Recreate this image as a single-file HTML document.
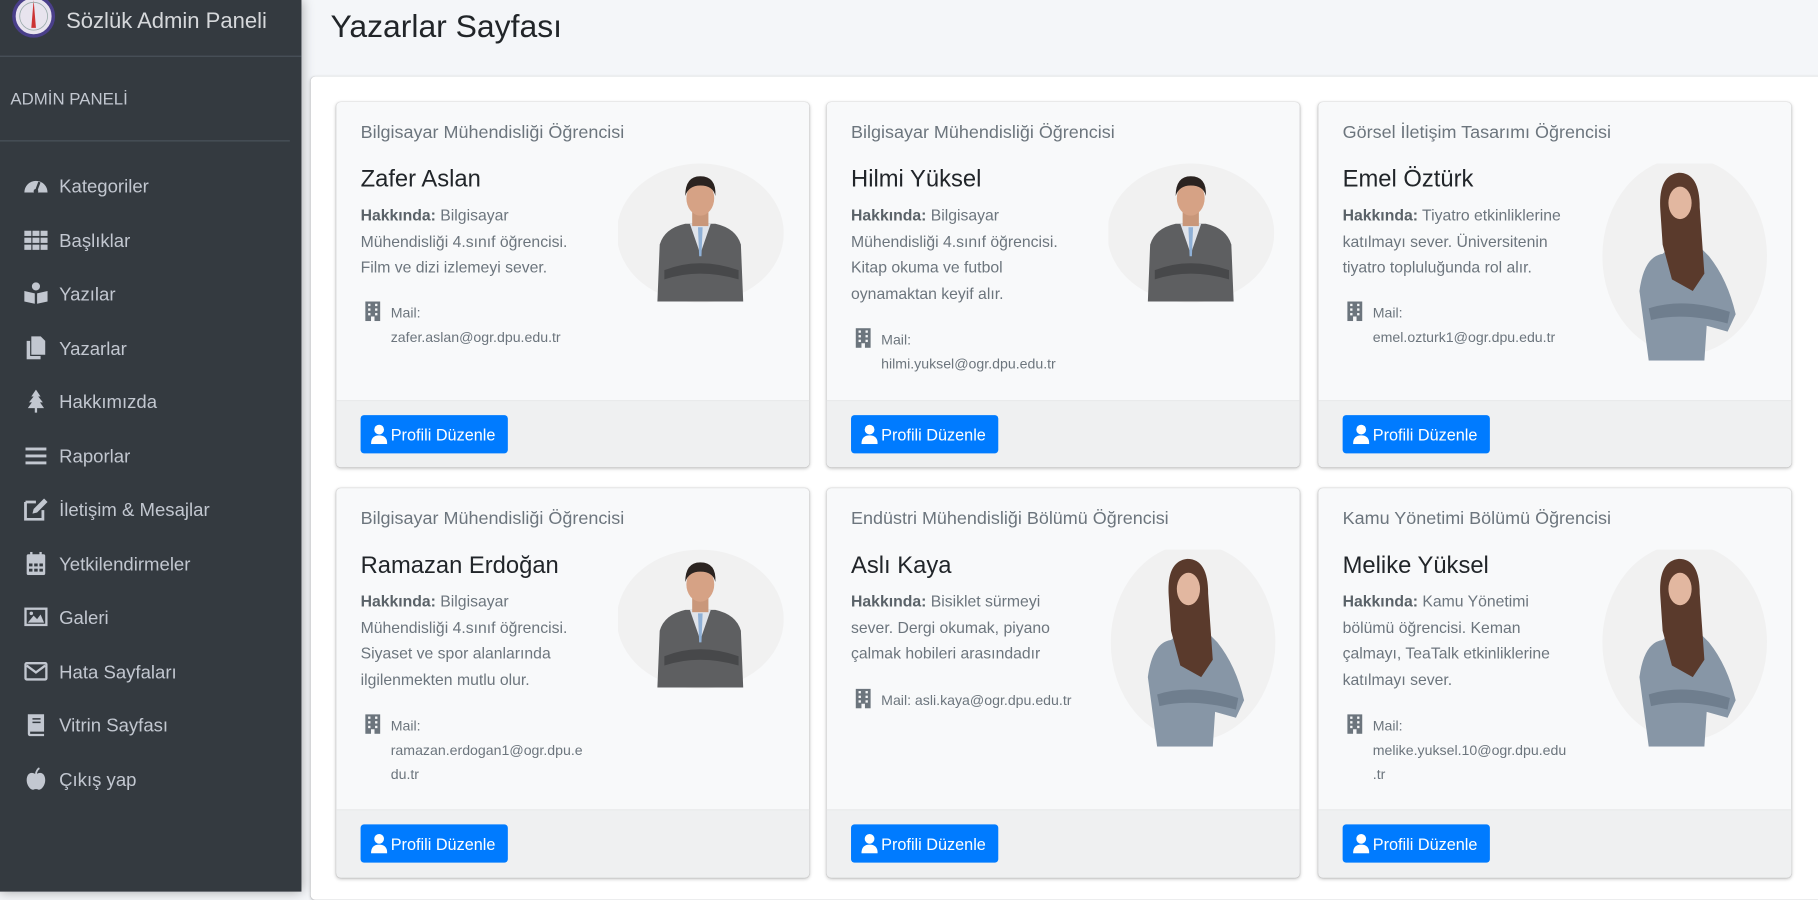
<!DOCTYPE html>
<html><head><meta charset="utf-8">
<style>
*{margin:0;padding:0;box-sizing:border-box}
html,body{width:1818px;height:891px;overflow:hidden;background:#f4f6f9}
#w{position:absolute;left:0;top:0;width:1568px;height:769px;transform:scale(1.15944);transform-origin:0 0;font-family:"Liberation Sans",sans-serif;background:#f4f6f9}
.a{position:absolute;white-space:nowrap}
#sb{position:absolute;left:0;top:0;width:260px;height:769px;background:#343a40;box-shadow:0 0 10px rgba(0,0,0,.35)}
.nav{position:absolute;left:51px;font-size:16px;color:#c2c7d0;line-height:20px;margin-top:2px}
.ic{position:absolute;left:20px;width:22px;height:20px}
.card{position:absolute;width:408px;background:#f8f9fa;border-radius:4px;box-shadow:0 0 1px rgba(0,0,0,.2),0 1px 3px rgba(0,0,0,.25);overflow:hidden}
.hd{position:absolute;left:21px;top:18px;font-size:15.5px;color:#6c757d}
.nm{position:absolute;left:21px;top:55px;font-size:20.5px;color:#212529}
.ab{position:absolute;left:21px;top:87px;font-size:13.6px;line-height:22.6px;color:#6c757d;white-space:nowrap}
.ab b{color:#5a6268}
.ml{position:absolute;left:47px;font-size:12.2px;line-height:21px;color:#6c757d;white-space:nowrap;margin-top:1px}
.bld{position:absolute;left:25px;width:13px;height:17px}
.ft{position:absolute;left:0;right:0;bottom:0;background:#eff0f1;border-top:1px solid #e9eaeb}
.btn{position:absolute;left:21px;top:12px;width:127px;height:33px;background:#007bff;border-radius:3px;color:#fff;font-size:14px;line-height:34px;padding-left:26px}
.btn svg{position:absolute;left:9px;top:8px}
.ph{position:absolute}
</style></head><body><div id="w">
<div id="sb">
 <svg class="a" style="left:10px;top:-6px" width="38" height="40" viewBox="0 0 38 40"><circle cx="19" cy="20" r="17" fill="#e8e4ee" stroke="#4a3f8a" stroke-width="3"/><path d="M19 6 L17 30 L21 30 Z" fill="#c33"/><circle cx="19" cy="20" r="12" fill="none" stroke="#9aa" stroke-width=".7"/></svg>
 <div class="a" style="left:57px;top:8px;font-size:19px;color:#d6d8db">Sözlük Admin Paneli</div>
 <div class="a" style="left:0;top:48px;width:260px;height:1px;background:#4b545c"></div>
 <div class="a" style="left:9px;top:78px;font-size:14.5px;color:#c2c7d0">ADMİN PANELİ</div>
 <div class="a" style="left:0;top:121px;width:250px;height:1px;background:#4b545c"></div>

 <svg class="ic" style="top:150px" viewBox="0 0 22 20"><path d="M1 16 A10 10 0 1 1 21 16 Z" fill="#c2c7d0"/><path d="M11 15 L14 7" stroke="#343a40" stroke-width="2"/><circle cx="11" cy="15" r="2" fill="#343a40"/></svg>
 <div class="nav" style="top:150px">Kategoriler</div>
 <svg class="ic" style="top:197px" viewBox="0 0 22 20"><g fill="#c2c7d0"><rect x="1" y="2" width="6" height="4.5"/><rect x="8" y="2" width="6" height="4.5"/><rect x="15" y="2" width="6" height="4.5"/><rect x="1" y="8" width="6" height="4.5"/><rect x="8" y="8" width="6" height="4.5"/><rect x="15" y="8" width="6" height="4.5"/><rect x="1" y="14" width="6" height="4.5"/><rect x="8" y="14" width="6" height="4.5"/><rect x="15" y="14" width="6" height="4.5"/></g></svg>
 <div class="nav" style="top:197px">Başlıklar</div>
 <svg class="ic" style="top:243px" viewBox="0 0 22 20"><g fill="#c2c7d0"><circle cx="11" cy="4" r="3.5"/><path d="M1 8 L10 10 L10 19 L1 17Z M21 8 L12 10 L12 19 L21 17Z"/></g></svg>
 <div class="nav" style="top:243px">Yazılar</div>
 <svg class="ic" style="top:290px" viewBox="0 0 22 20"><g fill="#c2c7d0"><path d="M3 4 H6 V17 H15 V20 H3Z"/><path d="M7 0 H15 L19 4 V16 H7Z"/></g></svg>
 <div class="nav" style="top:290px">Yazarlar</div>
 <svg class="ic" style="top:336px" viewBox="0 0 22 20"><path d="M11 0 L15 6 H13 L17 11 H14.5 L18 16 H12 V20 H10 V16 H4 L7.5 11 H5 L9 6 H7Z" fill="#c2c7d0"/></svg>
 <div class="nav" style="top:336px">Hakkımızda</div>
 <svg class="ic" style="top:383px" viewBox="0 0 22 20"><g fill="#c2c7d0"><rect x="2" y="3" width="18" height="2.5"/><rect x="2" y="9" width="18" height="2.5"/><rect x="2" y="15" width="18" height="2.5"/></g></svg>
 <div class="nav" style="top:383px">Raporlar</div>
 <svg class="ic" style="top:429px" viewBox="0 0 22 20"><path d="M2 4 H11 M2 4 V19 H17 V11" fill="none" stroke="#c2c7d0" stroke-width="2.4"/><path d="M8 14 L9 10 L18 1 L21 4 L12 13Z" fill="#c2c7d0"/></svg>
 <div class="nav" style="top:429px">İletişim &amp; Mesajlar</div>
 <svg class="ic" style="top:476px" viewBox="0 0 22 20"><g fill="#c2c7d0"><rect x="3" y="2" width="16" height="18" rx="1.5"/><rect x="6" y="0" width="2" height="4"/><rect x="14" y="0" width="2" height="4"/></g><g fill="#343a40"><rect x="5" y="10" width="3" height="2.5"/><rect x="9.5" y="10" width="3" height="2.5"/><rect x="14" y="10" width="3" height="2.5"/><rect x="5" y="14.5" width="3" height="2.5"/><rect x="9.5" y="14.5" width="3" height="2.5"/><rect x="14" y="14.5" width="3" height="2.5"/></g></svg>
 <div class="nav" style="top:476px">Yetkilendirmeler</div>
 <svg class="ic" style="top:522px" viewBox="0 0 22 20"><rect x="2" y="3" width="18" height="14" fill="none" stroke="#c2c7d0" stroke-width="2"/><path d="M4 15 L9 9 L12 12 L15 8 L18 15Z" fill="#c2c7d0"/><circle cx="7" cy="7" r="1.5" fill="#c2c7d0"/></svg>
 <div class="nav" style="top:522px">Galeri</div>
 <svg class="ic" style="top:569px" viewBox="0 0 22 20"><rect x="2" y="3" width="18" height="14" rx="1" fill="none" stroke="#c2c7d0" stroke-width="2"/><path d="M3 5 L11 11 L19 5" fill="none" stroke="#c2c7d0" stroke-width="2"/></svg>
 <div class="nav" style="top:569px">Hata Sayfaları</div>
 <svg class="ic" style="top:615px" viewBox="0 0 22 20"><path d="M4 1 H18 V16 H6 V18 H18 V20 H6 A2 2 0 0 1 4 18Z" fill="#c2c7d0"/><path d="M8 5 H15 M8 8 H15" stroke="#343a40" stroke-width="1.3"/></svg>
 <div class="nav" style="top:615px">Vitrin Sayfası</div>
 <svg class="ic" style="top:662px" viewBox="0 0 22 20"><path d="M11 6 C7 3 3 5 3 11 C3 16 7 20 9 19 C10 18.5 12 18.5 13 19 C15 20 19 16 19 11 C19 5 15 3 11 6Z" fill="#c2c7d0"/><path d="M11 6 C11 3 13 1 14 0.5" stroke="#c2c7d0" stroke-width="1.6" fill="none"/></svg>
 <div class="nav" style="top:662px">Çıkış yap</div>
</div>

<div class="a" style="left:285px;top:7px;font-size:27.5px;color:#212529">Yazarlar Sayfası</div>
<div class="a" style="left:268px;top:66px;width:1310px;height:710px;background:#fff;border-radius:4px;box-shadow:0 0 1px rgba(0,0,0,.2),0 1px 3px rgba(0,0,0,.2)"></div>

<svg width="0" height="0" style="position:absolute"><defs>
<g id="man"><ellipse cx="71" cy="60" rx="72" ry="60" fill="#f1f1f1"/><path d="M34 119 L36 70 Q40 56 58 52 L84 52 Q102 56 106 70 L108 119Z" fill="#5e5f61"/><path d="M62 52 L71 78 L80 52Z" fill="#dfe3ea"/><path d="M69 55 L73 55 L72 80 L70 80Z" fill="#8fb0d6"/><path d="M40 92 Q70 80 104 92 L104 100 Q70 90 40 100Z" fill="#47484a"/><rect x="64" y="40" width="14" height="14" fill="#c9977a"/><ellipse cx="71" cy="30" rx="12" ry="15" fill="#d6a285"/><path d="M58 28 Q58 11 71 11 Q85 11 84 28 Q82 19 71 19 Q61 19 58 28Z" fill="#2b2320"/></g>
<g id="wom"><ellipse cx="71" cy="80" rx="71" ry="85" fill="#f1f1f1"/><path d="M40 170 L32 110 Q36 80 52 78 L72 60 L92 80 Q108 100 115 130 L108 145 L90 140 L88 170Z" fill="#8796a6"/><path d="M50 40 Q48 10 66 8 Q84 8 84 38 L88 95 L78 110 L60 100 L52 70Z" fill="#5a3a2c"/><ellipse cx="67" cy="34" rx="10" ry="14" fill="#e2b7a0"/><path d="M40 125 Q70 115 110 128 L108 138 Q70 128 42 135Z" fill="#6f7e8e"/></g>
<g id="bi"><path d="M0 0 H13 V17 H8 V13 H5 V17 H0Z" fill="#6c757d"/><g fill="#f8f9fa"><rect x="2.5" y="2" width="2" height="2"/><rect x="8.5" y="2" width="2" height="2"/><rect x="2.5" y="6" width="2" height="2"/><rect x="8.5" y="6" width="2" height="2"/><rect x="2.5" y="10" width="2" height="2"/><rect x="8.5" y="10" width="2" height="2"/></g></g>
<g id="us"><circle cx="7" cy="4.5" r="4.2" fill="#fff"/><path d="M0 17 Q0 9.5 7 9.5 Q14 9.5 14 17Z" fill="#fff"/></g>
</defs></svg>

<!-- Row 1 -->
<div class="card" style="left:290px;top:88px;height:315px">
 <div class="hd">Bilgisayar Mühendisliği Öğrencisi</div>
 <div class="nm">Zafer Aslan</div>
 <div class="ab"><b>Hakkında:</b> Bilgisayar<br>Mühendisliği 4.sınıf öğrencisi.<br>Film ve dizi izlemeyi sever.</div>
 <svg class="bld" style="top:172px"><use href="#bi"/></svg>
 <div class="ml" style="top:171px">Mail:<br>zafer.aslan@ogr.dpu.edu.tr</div>
 <svg class="ph" style="left:243px;top:53px" width="143" height="120"><use href="#man"/></svg>
 <div class="ft" style="height:58px"><div class="btn"><svg width="14" height="17"><use href="#us"/></svg>Profili Düzenle</div></div>
</div>
<div class="card" style="left:713px;top:88px;height:315px">
 <div class="hd">Bilgisayar Mühendisliği Öğrencisi</div>
 <div class="nm">Hilmi Yüksel</div>
 <div class="ab"><b>Hakkında:</b> Bilgisayar<br>Mühendisliği 4.sınıf öğrencisi.<br>Kitap okuma ve futbol<br>oynamaktan keyif alır.</div>
 <svg class="bld" style="top:195px"><use href="#bi"/></svg>
 <div class="ml" style="top:194px">Mail:<br>hilmi.yuksel@ogr.dpu.edu.tr</div>
 <svg class="ph" style="left:243px;top:53px" width="143" height="120"><use href="#man"/></svg>
 <div class="ft" style="height:58px"><div class="btn"><svg width="14" height="17"><use href="#us"/></svg>Profili Düzenle</div></div>
</div>
<div class="card" style="left:1137px;top:88px;height:315px">
 <div class="hd">Görsel İletişim Tasarımı Öğrencisi</div>
 <div class="nm">Emel Öztürk</div>
 <div class="ab"><b>Hakkında:</b> Tiyatro etkinliklerine<br>katılmayı sever. Üniversitenin<br>tiyatro topluluğunda rol alır.</div>
 <svg class="bld" style="top:172px"><use href="#bi"/></svg>
 <div class="ml" style="top:171px">Mail:<br>emel.ozturk1@ogr.dpu.edu.tr</div>
 <svg class="ph" style="left:245px;top:53px" width="143" height="170"><use href="#wom"/></svg>
 <div class="ft" style="height:58px"><div class="btn"><svg width="14" height="17"><use href="#us"/></svg>Profili Düzenle</div></div>
</div>

<!-- Row 2 -->
<div class="card" style="left:290px;top:421px;height:336px">
 <div class="hd">Bilgisayar Mühendisliği Öğrencisi</div>
 <div class="nm">Ramazan Erdoğan</div>
 <div class="ab"><b>Hakkında:</b> Bilgisayar<br>Mühendisliği 4.sınıf öğrencisi.<br>Siyaset ve spor alanlarında<br>ilgilenmekten mutlu olur.</div>
 <svg class="bld" style="top:195px"><use href="#bi"/></svg>
 <div class="ml" style="top:194px">Mail:<br>ramazan.erdogan1@ogr.dpu.e<br>du.tr</div>
 <svg class="ph" style="left:243px;top:53px" width="143" height="120"><use href="#man"/></svg>
 <div class="ft" style="height:59px"><div class="btn"><svg width="14" height="17"><use href="#us"/></svg>Profili Düzenle</div></div>
</div>
<div class="card" style="left:713px;top:421px;height:336px">
 <div class="hd">Endüstri Mühendisliği Bölümü Öğrencisi</div>
 <div class="nm">Aslı Kaya</div>
 <div class="ab"><b>Hakkında:</b> Bisiklet sürmeyi<br>sever. Dergi okumak, piyano<br>çalmak hobileri arasındadır</div>
 <svg class="bld" style="top:173px"><use href="#bi"/></svg>
 <div class="ml" style="top:172px">Mail: asli.kaya@ogr.dpu.edu.tr</div>
 <svg class="ph" style="left:245px;top:53px" width="143" height="170"><use href="#wom"/></svg>
 <div class="ft" style="height:59px"><div class="btn"><svg width="14" height="17"><use href="#us"/></svg>Profili Düzenle</div></div>
</div>
<div class="card" style="left:1137px;top:421px;height:336px">
 <div class="hd">Kamu Yönetimi Bölümü Öğrencisi</div>
 <div class="nm">Melike Yüksel</div>
 <div class="ab"><b>Hakkında:</b> Kamu Yönetimi<br>bölümü öğrencisi. Keman<br>çalmayı, TeaTalk etkinliklerine<br>katılmayı sever.</div>
 <svg class="bld" style="top:195px"><use href="#bi"/></svg>
 <div class="ml" style="top:194px">Mail:<br>melike.yuksel.10@ogr.dpu.edu<br>.tr</div>
 <svg class="ph" style="left:245px;top:53px" width="143" height="170"><use href="#wom"/></svg>
 <div class="ft" style="height:59px"><div class="btn"><svg width="14" height="17"><use href="#us"/></svg>Profili Düzenle</div></div>
</div>
</div></body></html>
